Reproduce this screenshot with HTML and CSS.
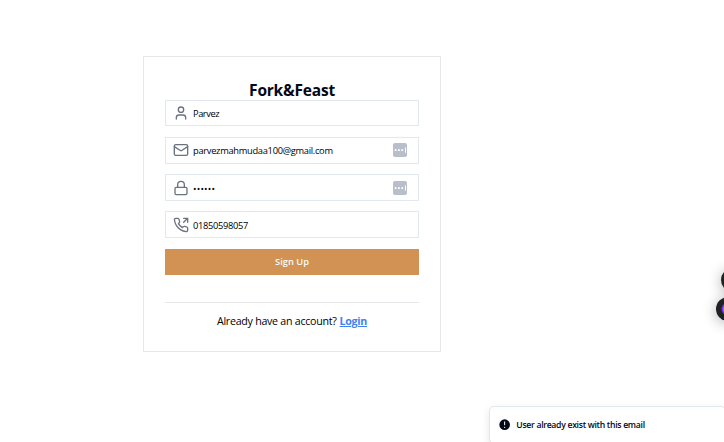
FILE: index.html
```html
<!DOCTYPE html>
<html lang="en">
<head>
<meta charset="utf-8">
<title>Fork&amp;Feast</title>
<link rel="stylesheet" href="styles.css">
</head>
<body>
<main class="card">
  <h1 class="brand"><span>Fork&amp;Feast</span></h1>
  <form class="form">
    <div class="field first">
      <svg class="icon" viewBox="0 0 24 24"><path d="M19 21v-2a4 4 0 0 0-4-4H9a4 4 0 0 0-4 4v2"/><circle cx="12" cy="7" r="4"/></svg>
      <span class="value name">Parvez</span>
    </div>
    <div class="field">
      <svg class="icon" viewBox="0 0 24 24"><rect x="2" y="4" width="20" height="16" rx="2"/><path d="m22 7-8.97 5.7a1.94 1.94 0 0 1-2.06 0L2 7"/></svg>
      <span class="value email">parvezmahmudaa100@gmail.com</span>
      <svg class="filler" viewBox="0 0 14 14"><rect width="14" height="14" rx="2"/><path d="M1.7 6.2h1.8v1.8H1.7zM5 6.2h1.8v1.8H5zM8.3 6.2h1.8v1.8H8.3zM12 4.5h1v5.2h-1z"/></svg>
    </div>
    <div class="field">
      <svg class="icon" viewBox="0 0 24 24"><rect x="3" y="11" width="18" height="11" rx="2"/><path d="M7 11V7a5 5 0 0 1 10 0v4"/></svg>
      <span class="value dots">••••••</span>
      <svg class="filler" viewBox="0 0 14 14"><rect width="14" height="14" rx="2"/><path d="M1.7 6.2h1.8v1.8H1.7zM5 6.2h1.8v1.8H5zM8.3 6.2h1.8v1.8H8.3zM12 4.5h1v5.2h-1z"/></svg>
    </div>
    <div class="field">
      <svg class="icon" viewBox="0 0 24 24"><path d="M22 8V2h-6M16 8l6-6"/><path d="M22 16.92v3a2 2 0 0 1-2.18 2 19.79 19.79 0 0 1-8.63-3.07 19.5 19.5 0 0 1-6-6 19.79 19.79 0 0 1-3.07-8.67A2 2 0 0 1 4.11 2h3a2 2 0 0 1 2 1.72 12.84 12.84 0 0 0 .7 2.81 2 2 0 0 1-.45 2.11L8.09 9.91a16 16 0 0 0 6 6l1.27-1.27a2 2 0 0 1 2.11-.45 12.84 12.84 0 0 0 2.81.7A2 2 0 0 1 22 16.92z"/></svg>
      <span class="value phone">01850598057</span>
    </div>
    <button class="submit" type="button"><span>Sign Up</span></button>
  </form>
  <p class="switch"><span class="question">Already have an account?</span><a class="login" href="#">Login</a></p>
</main>
<div class="bubble bubble-top"></div>
<div class="bubble bubble-main"></div>
<div class="toast">
  <svg class="alert" viewBox="0 0 20 20"><path fill-rule="evenodd" d="M18 10a8 8 0 1 1-16 0 8 8 0 0 1 16 0zm-8-5a.75.75 0 0 1 .75.75v4.5a.75.75 0 0 1-1.5 0v-4.5A.75.75 0 0 1 10 5zm0 10a1 1 0 1 0 0-2 1 1 0 0 0 0 2z" clip-rule="evenodd"/></svg>
  <span class="message">User already exist with this email</span>
</div>
</body>
</html>
```
FILE: styles.css
```css
* { box-sizing: border-box; }
body {
  margin: 0;
  height: 442px;
  overflow: hidden;
  position: relative;
  background: #fff;
  color: #020817;
  font-family: "Open Sans", "Noto Sans", sans-serif;
}
.card {
  width: 298px;
  height: 296px;
  margin: 56px 0 0 143px;
  padding: 22px 21px 0;
  border: 1px solid #e5e7eb;
  display: flow-root;
}
.brand {
  margin: 0;
  height: 21px;
  font-size: 15.5px;
  line-height: 22px;
  letter-spacing: -.2px;
  font-weight: 700;
  text-align: center;
  white-space: nowrap;
}
.form { display: flex; flex-direction: column; gap: 10.5px; }
.field {
  height: 26.67px;
  border: 1px solid #e2e8f0;
  display: flex;
  align-items: center;
  padding: 0 11px 0 7px;
}
.first { height: 26.4px; margin-bottom: .27px; }
.icon {
  width: 16px;
  height: 16px;
  margin-right: 4px;
  flex: none;
  fill: none;
  stroke: #6b7280;
  stroke-width: 2;
  stroke-linecap: round;
  stroke-linejoin: round;
}
.value { padding-top: 2px; color: #000; font-size: 9.3px; line-height: 14px; white-space: nowrap; }
.name { letter-spacing: -.45px; }
.email { letter-spacing: -.29px; }
.phone { letter-spacing: -.32px; }
.dots { letter-spacing: .2px; }
.filler { width: 14px; height: 14px; margin-left: auto; flex: none; }
.filler rect { fill: #b8bfca; }
.filler path { fill: #fff; }
.submit {
  height: 26px;
  padding: 0;
  border: 0;
  background: #d19254;
  color: #f8fafc;
  font: 600 9.3px/26px "Open Sans", "Noto Sans", sans-serif;
}
.switch {
  margin: 27px 0 0;
  padding-top: 10px;
  border-top: 1px solid #e5e7eb;
  display: flex;
  justify-content: center;
  gap: 3px;
  font-size: 10.67px;
  line-height: 16px;
  white-space: nowrap;
}
.question { color: #000; letter-spacing: -.27px; }
.login { color: #3b82f6; font-weight: 700; letter-spacing: -.3px; text-decoration: underline; }
.bubble {
  position: absolute;
  width: 24px;
  height: 24px;
  border-radius: 50%;
  background: #202124;
  box-shadow: 0 2px 14px rgba(0, 0, 0, .3);
}
.bubble-top { left: 721px; top: 268px; }
.bubble-main {
  left: 716px;
  top: 297px;
  background: radial-gradient(circle, #c070ff 0 4px, #7c3aed 5.5px, #202124 7px);
}
.toast {
  position: absolute;
  left: 489px;
  top: 406px;
  width: 237px;
  height: 38px;
  padding-left: 8px;
  border: 1px solid #e2e8f0;
  border-radius: 5px;
  background: #fff;
  box-shadow: 0 3px 9px rgba(0, 0, 0, .1);
  display: flex;
  align-items: center;
  gap: 5px;
}
.alert { width: 13.3px; height: 13.3px; fill: #020817; }
.message { font-size: 8.67px; font-weight: 600; letter-spacing: -.3px; line-height: 13px; white-space: nowrap; }
```
